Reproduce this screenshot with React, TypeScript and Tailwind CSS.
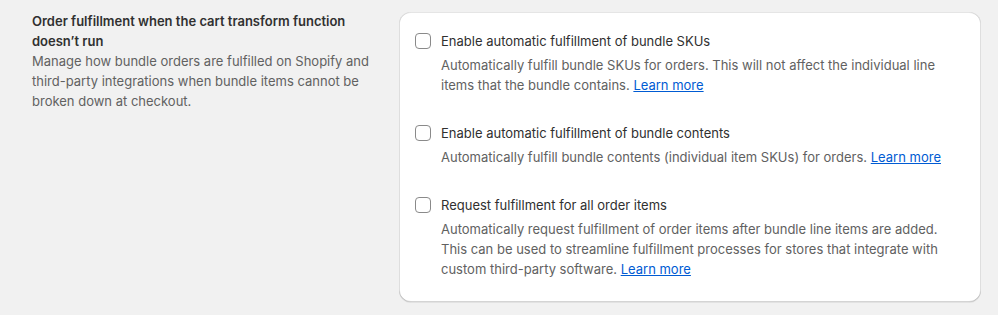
import React from "react";

const items = [
  {
    label: "Enable automatic fulfillment of bundle SKUs",
    desc: "Automatically fulfill bundle SKUs for orders. This will not affect the individual line items that the bundle contains.",
  },
  {
    label: "Enable automatic fulfillment of bundle contents",
    desc: "Automatically fulfill bundle contents (individual item SKUs) for orders.",
  },
  {
    label: "Request fulfillment for all order items",
    desc: "Automatically request fulfillment of order items after bundle line items are added. This can be used to streamline fulfillment processes for stores that integrate with custom third-party software.",
  },
];

export default function App() {
  return (
    <div
      className="w-[998px] h-[315px] bg-[#f1f1f1] text-[13px] leading-[20px] text-[#303030]"
      style={{ fontFamily: "Inter, 'Noto Sans', sans-serif" }}
    >
      <div className="flex items-start pt-3 pl-8">
        <div className="w-[345px] -mt-px">
          <h2 className="font-semibold text-[#303030]">
            Order fulfillment when the cart transform function doesn’t run
          </h2>
          <p className="text-[#616161]">
            Manage how bundle orders are fulfilled on Shopify and third-party integrations when bundle items cannot be broken down at checkout.
          </p>
        </div>
        <div className="ml-[22px] w-[582px] bg-white rounded-xl shadow-[0_1px_0_0_rgba(26,26,26,0.07),0_1px_0_0_rgba(204,204,204,0.5)_inset,0_-1px_0_0_rgba(0,0,0,0.17)_inset,-1px_0_0_0_rgba(0,0,0,0.13)_inset,1px_0_0_0_rgba(0,0,0,0.13)_inset] pl-4 pr-4 pt-[19px] pb-[23px] flex flex-col gap-7">
          {items.map((it) => (
            <div key={it.label}>
              <label className="flex items-center gap-[10px]">
                <span className="w-4 h-4 shrink-0 rounded-[4px] border border-[#8a8a8a] bg-white" />
                <span className="text-[#303030]">{it.label}</span>
              </label>
              <p className="pl-[26px] pt-[4px] text-[#616161]">
                {it.desc}{" "}
                <a href="#" className="text-[#005bd3] underline">
                  Learn more
                </a>
              </p>
            </div>
          ))}
        </div>
      </div>
    </div>
  );
}
